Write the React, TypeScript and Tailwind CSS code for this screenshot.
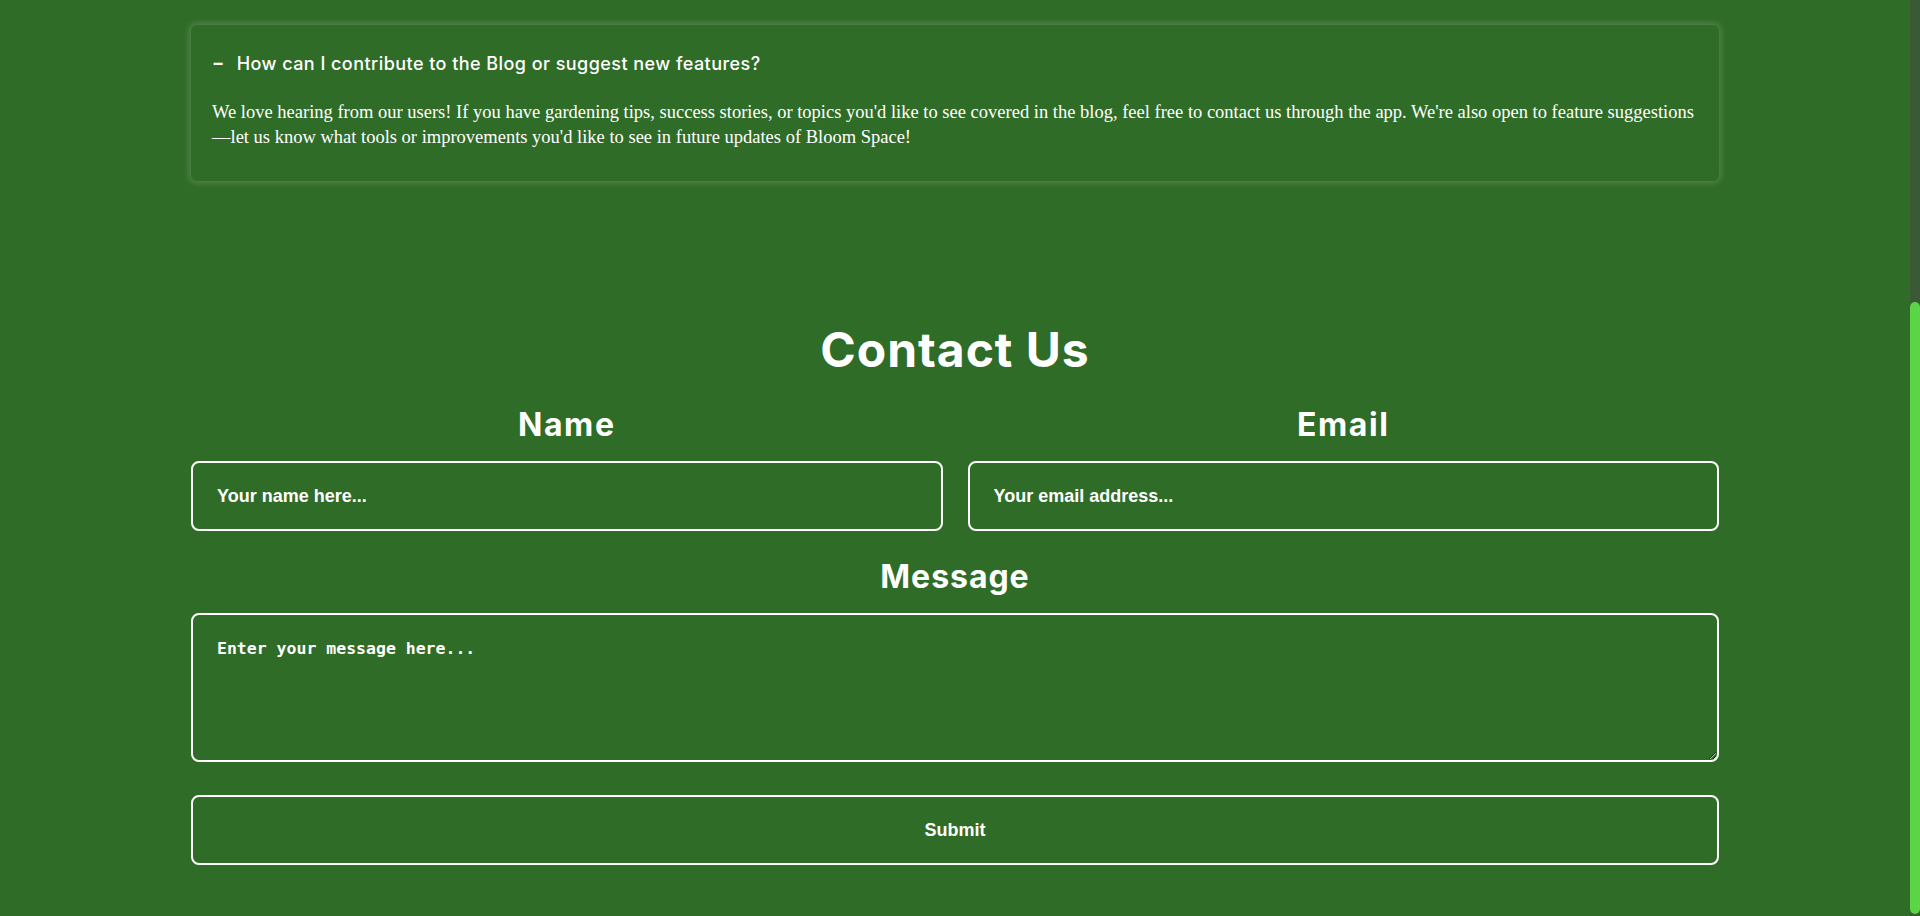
import { useState } from 'react';

const heading = { fontFamily: 'Inter, "Noto Sans", sans-serif' };
const sans = { fontFamily: '"Liberation Sans", Arial, sans-serif' };

export default function App() {
  const [name, setName] = useState('');
  const [email, setEmail] = useState('');
  const [message, setMessage] = useState('');

  return (
    <div className="flex h-[916px] overflow-hidden bg-[#2f6c27] text-white">
      <main className="flex-1 px-[191px]">
        {/* FAQ item */}
        <div className="mt-[25px] rounded-md bg-[#2f6c27] px-[21px] pt-[24px] pb-[31px] shadow-[0_0_6px_2px_rgba(255,255,255,0.18)]">
          <div className="flex h-[28px] items-center gap-[12px] text-[18px] font-medium tracking-[0.025em]" style={heading}>
            <span className="text-[18px] font-bold leading-none">−</span>
            <span>How can I contribute to the Blog or suggest new features?</span>
          </div>
          <p
            className="mt-[23px] text-[18.5px] leading-[25px]"
            style={{ fontFamily: '"Liberation Serif", "Times New Roman", serif' }}
          >
            We love hearing from our users! If you have gardening tips, success stories, or topics you'd like to see
            covered in the blog, feel free to contact us through the app. We're also open to feature suggestions—let us
            know what tools or improvements you'd like to see in future updates of Bloom Space!
          </p>
        </div>

        {/* Contact form */}
        <section className="mt-[140px]">
          <h2 className="text-center text-[48px] leading-[58px] font-bold tracking-[0.02em]" style={heading}>
            Contact Us
          </h2>

          <div className="mt-[26px] grid grid-cols-2 gap-[25px]">
            <div className="flex flex-col">
              <label className="text-center text-[32px] leading-[40px] font-bold tracking-[0.05em]" style={heading}>
                Name
              </label>
              <input
                value={name}
                onChange={(e) => setName(e.target.value)}
                placeholder="Your name here..."
                className="mt-[16px] h-[70px] rounded-lg border-2 border-white bg-transparent px-[24px] text-[18px] font-bold text-white placeholder:text-white focus:outline-none"
                style={sans}
              />
            </div>
            <div className="flex flex-col">
              <label className="text-center text-[32px] leading-[40px] font-bold tracking-[0.05em]" style={heading}>
                Email
              </label>
              <input
                value={email}
                onChange={(e) => setEmail(e.target.value)}
                placeholder="Your email address..."
                className="mt-[16px] h-[70px] rounded-lg border-2 border-white bg-transparent px-[24px] text-[18px] font-bold text-white placeholder:text-white focus:outline-none"
                style={sans}
              />
            </div>
          </div>

          <label
            className="mt-[26px] block text-center text-[32px] leading-[40px] font-bold tracking-[0.03em]"
            style={heading}
          >
            Message
          </label>
          <textarea
            value={message}
            onChange={(e) => setMessage(e.target.value)}
            placeholder="Enter your message here..."
            className="mt-[16px] block h-[149px] w-full rounded-lg border-2 border-white bg-transparent px-[24px] pt-[22px] text-[16.5px] leading-[24px] font-bold text-white placeholder:text-white focus:outline-none"
            style={{ fontFamily: '"DejaVu Sans Mono", "Liberation Mono", monospace' }}
          />

          <button
            className="mt-[33px] block h-[70px] w-full rounded-lg border-2 border-white text-[18px] font-bold"
            style={sans}
          >
            Submit
          </button>
        </section>
      </main>

      {/* page scrollbar */}
      <aside className="flex w-[10px] flex-col bg-[#3b5937]">
        <div className="h-[302px]" />
        <div className="mb-[2px] flex-1 rounded-full bg-[#5bd545]" />
      </aside>
    </div>
  );
}
